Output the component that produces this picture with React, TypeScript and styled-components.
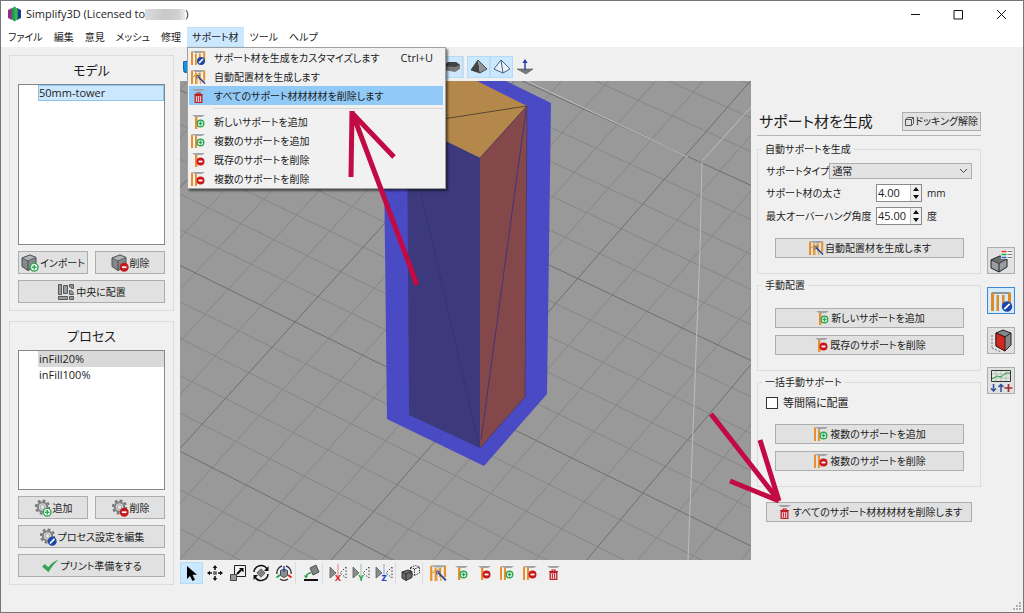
import React, { useState } from "react";
import styled, { createGlobalStyle, css } from "styled-components";

const GlobalStyle = createGlobalStyle`
  * { box-sizing: border-box; }
  body {
    margin: 0;
    background: #f0f0f0;
    color: #1c1c1c;
    font: 10px/14px "Open Sans", "Noto Sans CJK JP", sans-serif;
    font-feature-settings: "palt";
  }
  button, input, select {
    font: inherit;
    font-feature-settings: inherit;
    color: inherit;
    margin: 0;
  }
  svg { display: block; flex: none; }
`;

/* ---------- window frame ---------- */

const Window = styled.div`
  position: relative;
  display: flex;
  flex-direction: column;
  min-height: 100vh;
  border: 1px solid #77747a;
  background: #f0f0f0;
`;

const TitleBar = styled.header`
  display: flex;
  align-items: center;
  height: 26px;
  padding-left: 6px;
  background: #fff;
  font-size: 11px;
`;

const Title = styled.h1`
  display: flex;
  flex: 1;
  align-items: center;
  margin: 0 0 0 4px;
  font: inherit;
`;

const Redacted = styled.span`
  width: 40px;
  height: 11px;
  background: linear-gradient(90deg, #dcdcdc, #c8c8c8 50%, #d2d2d2 85%, #ececec);
`;

const WindowButton = styled.button`
  display: grid;
  place-items: center;
  width: 43px;
  height: 26px;
  padding: 0;
  border: 0;
  background: none;
`;

const MenuBar = styled.nav`
  display: flex;
  gap: 1px;
  height: 20px;
  padding-left: 2px;
  background: #fff;
`;

const MenuSlot = styled.div`
  position: relative;
`;

const MenuTitle = styled.button<{ $open?: boolean }>`
  height: 20px;
  padding: 0 5px;
  border: 1px solid ${(p) => (p.$open ? "#c2e2f8" : "transparent")};
  border-width: 1px 0;
  background: ${(p) => (p.$open ? "#cce8ff" : "transparent")};
  line-height: 18px;
  white-space: nowrap;
`;

const Menu = styled.div`
  position: absolute;
  top: 20px;
  left: 0;
  z-index: 2;
  width: 259px;
  padding: 0 2px 0 1px;
  border: 1px solid #a0a0a0;
  background: #f1f1f1;
  box-shadow: 2px 2px 2px rgba(0, 0, 0, 0.5);
`;

const MenuItem = styled.button<{ $active?: boolean }>`
  display: flex;
  align-items: center;
  width: 100%;
  height: 19px;
  padding: 0 10px 0 1px;
  border: 0;
  background: ${(p) => (p.$active ? "#91c9f7" : "transparent")};
  text-align: left;
  white-space: nowrap;
`;

const MenuLabel = styled.span`
  flex: 1;
  margin-left: 8px;
`;

const Shortcut = styled.kbd`
  font: inherit;
  font-size: 11px;
`;

const MenuRule = styled.hr`
  height: 1px;
  margin: 3px 0 3px 24px;
  border: 0;
  background: #d7d7d7;
`;

/* ---------- shared controls ---------- */

const PushButton = styled.button<{ $tall?: boolean }>`
  display: flex;
  flex: 1;
  align-items: center;
  justify-content: center;
  gap: 1px;
  height: ${(p) => (p.$tall ? "23px" : "20px")};
  flex-basis: ${(p) => (p.$tall ? "0" : "auto")};
  padding: 0;
  border: 1px solid #adadad;
  background: #e1e1e1;
  white-space: nowrap;
`;

const ToolRow = styled.div`
  display: flex;
  align-items: center;
  height: 24px;
`;

const ToolGroup = styled.div<{ $far?: boolean }>`
  display: flex;
  ${(p) => p.$far && css`margin-left: 237px;`}
  & + & { border-left: 1px solid #dcdcdc; padding-left: 3px; }
`;

const ToolButton = styled.button<{ $on?: boolean }>`
  display: grid;
  place-items: center;
  width: 23px;
  height: 22px;
  padding: 0;
  border: 1px solid ${(p) => (p.$on ? "#b4dcf6" : "transparent")};
  background: ${(p) => (p.$on ? "#cce8ff" : "transparent")};
`;

/* ---------- body columns ---------- */

const Body = styled.div`
  display: flex;
  flex: 1;
  padding: 0 8px;
`;

const LeftColumn = styled.aside`
  display: flex;
  flex: none;
  flex-direction: column;
  gap: 10px;
  width: 165px;
  padding-top: 8px;
`;

const Panel = styled.section`
  display: flex;
  flex: 1 1 auto;
  flex-direction: column;
  gap: 6px;
  padding: 0 8px 7px;
  border: 1px solid #dcdcdc;
`;

const PanelTitle = styled.h2`
  margin: 0 0 -6px;
  font-size: 13px;
  font-weight: 400;
  line-height: 28px;
  text-align: center;
`;

const List = styled.ul<{ $basis: number }>`
  flex: 1 0 ${(p) => p.$basis}px;
  margin: 0;
  padding: 0 0 0 19px;
  border: 1px solid #828790;
  background: #fff;
  font-size: 11px;
  list-style: none;
`;

const ListRow = styled.li<{ $mark?: "focus" | "plain" }>`
  height: 16px;
  border: 1px solid ${(p) => (p.$mark === "focus" ? "#8fc4ea" : "transparent")};
  background: ${(p) => (p.$mark === "focus" ? "#cce8ff" : p.$mark === "plain" ? "#d9d9d9" : "none")};
  line-height: 14px;
`;

const ButtonPair = styled.div`
  display: flex;
  gap: 7px;
`;

const Center = styled.main`
  display: flex;
  flex: 1;
  flex-direction: column;
  min-width: 0;
  margin: 0 6px;
  padding-top: 8px;
`;

const Viewport = styled.div`
  position: relative;
  flex: 1;
  min-height: 300px;
  margin: 2px 0 1px;
  background: #999;
  & > svg { position: absolute; width: 100%; height: 100%; }
`;

const RightColumn = styled.aside`
  flex: none;
  width: 224px;
  padding-top: 64px;
`;

const DockHeader = styled.div`
  display: flex;
  align-items: center;
  justify-content: space-between;
  height: 25px;
  padding: 0 0 4px 2px;
  border-bottom: 1px solid #b4b4b4;
  margin-bottom: 6px;
`;

const DockTitle = styled.h2`
  margin: 0;
  font-size: 15px;
  font-weight: 400;
  line-height: 20px;
`;

const UndockButton = styled(PushButton)`
  flex: none;
  width: 79px;
  height: 19px;
`;

const Group = styled.fieldset<{ $top: number }>`
  min-width: 0;
  margin: 0 0 4px;
  padding: ${(p) => p.$top}px 8px 15px;
  border: 1px solid #dcdcdc;
`;

const GroupTitle = styled.legend`
  margin-left: -4px;
  padding: 0 3px;
`;

const Field = styled.div<{ $h: number }>`
  display: flex;
  align-items: center;
  justify-content: space-between;
  height: ${(p) => p.$h}px;
  margin-bottom: 5px;
  white-space: nowrap;
`;

const Select = styled.select`
  width: 143px;
  height: 16px;
  padding: 0 2px;
  border: 1px solid #adadad;
  border-radius: 0;
  appearance: none;
  background: #e3e3e3;
  line-height: 14px;
`;

const SelectBox = styled.div`
  position: relative;
  display: flex;
  svg { position: absolute; right: 4px; top: 4px; pointer-events: none; }
`;

const SpinCell = styled.div`
  display: flex;
  flex: none;
  align-items: center;
  width: 96px;
`;

const Spin = styled.div`
  display: flex;
  width: 46px;
  height: 18px;
  margin-right: 5px;
  border: 1px solid #8a8a8a;
  background: #fff;
  font-size: 11px;
`;

const SpinInput = styled.input`
  flex: 1;
  min-width: 0;
  padding: 0 0 0 1px;
  border: 0;
  background: none;
`;

const SpinArrows = styled.div`
  display: flex;
  flex-direction: column;
  width: 11px;
`;

const SpinArrow = styled.button`
  display: grid;
  flex: 1;
  place-items: center;
  padding: 0;
  border: 0;
  border-left: 1px solid #c4c4c4;
  background: #f0f0f0;
`;

const ButtonStack = styled.div<{ $top?: number }>`
  display: flex;
  flex-direction: column;
  gap: 7px;
  margin: ${(p) => p.$top ?? 0}px 8px 0 9px;
`;

const Check = styled.label`
  display: flex;
  align-items: center;
  gap: 5px;
  height: 14px;
  font-size: 11px;
  input {
    width: 12px;
    height: 12px;
    appearance: none;
    border: 1px solid #333;
    background: #fff;
  }
`;

const RemoveAll = styled.div`
  display: flex;
  margin: 15px 9px 0;
`;

const SideTabs = styled.nav`
  display: flex;
  flex: none;
  flex-direction: column;
  gap: 13px;
  margin-left: 6px;
  padding-top: 200px;
`;

const SideTab = styled.button<{ $on?: boolean }>`
  display: grid;
  place-items: center;
  width: 28px;
  height: 27px;
  padding: 0;
  border: 1px solid ${(p) => (p.$on ? "#3b8ad0" : "#adadad")};
  background: ${(p) => (p.$on ? "#d5eafa" : "#e1e1e1")};
`;

const StatusBar = styled.footer`
  display: flex;
  align-items: flex-end;
  justify-content: flex-end;
  height: 27px;
  padding: 1px;
`;

const Arrows = styled.svg`
  position: absolute;
  top: -1px;
  left: -1px;
  z-index: 3;
  pointer-events: none;
`;

/* ---------- icons ---------- */

type Mark = "add" | "remove" | "edit" | "wand";

const Badge = ({ kind, x, y, r = 3.8 }: { kind: Mark; x: number; y: number; r?: number }) => {
  if (kind === "wand")
    return (
      <g>
        <path d={`M${x - 3} ${y - 3}L${x + 4} ${y + 4}`} stroke="#26408f" strokeWidth="1.6" />
        <path d={`M${x - 4} ${y - 1}v-3h3`} stroke="#5f7188" strokeWidth="1.2" fill="none" />
      </g>
    );
  const fill = { add: "#fff", remove: "#c9161d", edit: "#1d46a8" }[kind];
  const h = r * 0.6;
  return (
    <g>
      <circle cx={x} cy={y} r={r} fill={fill} stroke={kind === "add" ? "#2fa653" : fill} strokeWidth="1.4" />
      {kind === "add" && <path d={`M${x - h} ${y}h${2 * h}M${x} ${y - h}v${2 * h}`} stroke="#2fa653" strokeWidth="1.5" />}
      {kind === "remove" && <path d={`M${x - h} ${y}h${2 * h}`} stroke="#fff" strokeWidth="1.8" />}
      {kind === "edit" && <path d={`M${x - h} ${y + h}l${2 * h} ${-2 * h}`} stroke="#fff" strokeWidth="1.7" />}
    </g>
  );
};

const Cap = () => <path d="M2 1h13l-3 2h-7z" fill="#a0a4a8" stroke="none" />;

const SupportIcon = ({ pillars, mark, size = 16 }: { pillars: 1 | 2 | 4; mark: Mark; size?: number }) => (
  <svg width={size} height={size} viewBox="0 0 16 16" aria-hidden>
    <Cap />
    <g fill="#e6912d">
      {pillars === 1 && <path d="M5 3h2.400v12h-2.400z" />}
      {pillars === 2 && <path d="M1 1.500h2v13.500h-2zM5 3h2v12h-2z" />}
      {pillars === 4 && <path d="M1 1.500h2v13.500h-2zM5 3.500h1.800v11.500h-1.800zM9 3.500h1.800v8h-1.800zM13.200 1.500h2v10h-2z" />}
    </g>
    {pillars === 4 && mark === "wand" && (
      <path d="M3 8l2.500-2M7 6l2.500-2M7 9v6M10.500 12v3M14.200 11v1" stroke="#e6a04c" strokeWidth="1.200" fill="none" />
    )}
    <Badge kind={mark} x={mark === "edit" || mark === "wand" ? 11 : 10.5} y={mark === "wand" ? 10.5 : mark === "edit" ? 11 : 9.5} r={3.3} />
  </svg>
);

const TrashIcon = () => (
  <svg width="16" height="16" viewBox="0 0 16 16" fill="none" stroke="#bd2026" aria-hidden>
    <Cap />
    <path d="M4 6.500h9M7 6v-1h3v1" strokeWidth="1.200" />
    <path d="M5.200 7.500h6.600v6.800h-6.600z" fill="#f3dede" strokeWidth="1.300" />
    <path d="M7.400 8.500v5M9.600 8.500v5" />
  </svg>
);

const CubeIcon = ({ mark }: { mark: Mark }) => (
  <svg width="18" height="18" viewBox="0 0 18 18" aria-hidden>
    <path d="M1 4l8-3 6 2.500v9l-8 4-6-4z" fill="#85888a" stroke="#4a4d4f" />
    <path d="M1 4l6 2.800 8-3.300-6-2.500z" fill="#b0b2b4" stroke="#4a4d4f" strokeWidth=".7" />
    <path d="M7 6.800v9.700" stroke="#4a4d4f" />
    <Badge kind={mark} x={13.2} y={13.2} />
  </svg>
);

const GearIcon = ({ mark }: { mark: Mark }) => (
  <svg width="18" height="18" viewBox="0 0 18 18" aria-hidden>
    <circle cx="8.500" cy="8" r="6.600" fill="none" stroke="#707375" strokeWidth="2" strokeDasharray="2.800 2.380" />
    <circle cx="8.500" cy="8" r="4.700" fill="#d8d8d8" stroke="#7d8082" strokeWidth="2" />
    <circle cx="8.500" cy="8" r="2.300" fill="#e4e4e4" stroke="#888" strokeWidth=".6" />
    <Badge kind={mark} x={13.2} y={13.2} />
  </svg>
);

const ArrangeIcon = () => (
  <svg width="18" height="18" viewBox="0 0 18 18" fill="#999c9e" stroke="#55585a" aria-hidden>
    <path d="M1.500 1.500h3v10h-3zM6.500 2.500h4v8h-4zM1.500 13.500h9v3h-9zM12.500 1.500h4v4h-2v-1.500h-2zM12.500 7.500c4 0 4 3 4 4h-4zM12.500 13.500h4v3h-4z" />
  </svg>
);

const CheckIcon = () => (
  <svg width="18" height="18" viewBox="0 0 18 18" aria-hidden>
    <path d="M1 9.500l3-2.500 3.200 3.200c3-3.700 6-6 10.300-7.700-4.500 4.500-7.500 8.200-10 12.700z" fill="#35a655" />
  </svg>
);

const AppIcon = () => (
  <svg width="15" height="16" viewBox="0 0 15 16" aria-hidden>
    <path d="M1 4l4-2v12l-4-2z" fill="#a3218e" />
    <path d="M14 4l-4-2v12l4-2z" fill="#1c3c8c" />
    <path d="M4.500 3l3-2.500 3 2.500v10l-3 2.500-3-2.500z" fill="#1c9b4a" />
    <path d="M7.500 .5l3 2.500v10l-3 2.500z" fill="#37b55c" />
  </svg>
);

const UndockIcon = () => (
  <svg width="9" height="9" viewBox="0 0 9 9" fill="none" stroke="#555" aria-hidden>
    <path d="M2.500 .5h6l-2 2v6h-6v-6z M.5 2.500h6M8.500 .5v6l-2 2" />
  </svg>
);

const Chevron = () => (
  <svg width="9" height="8" viewBox="0 0 9 8" fill="none" stroke="#444" aria-hidden>
    <path d="M1 2l3.500 3.500 3.500-3.500" />
  </svg>
);

const tool = (children: React.ReactNode) => (
  <svg width="18" height="18" viewBox="0 0 18 18" fill="none" aria-hidden>{children}</svg>
);

const Mirror = ({ axis, color }: { axis: string; color: string }) => (
  <svg width="20" height="20" viewBox="0 0 20 20" fill="none" aria-hidden>
    <path d="M2 4v11l6-5z" fill="#8a8c8e" stroke="#55585a" strokeWidth=".8" />
    <path d="M18 4v11l-6-5z" stroke="#333" strokeDasharray="1.500 1.800" />
    <path d="M10 1v16" stroke={color} strokeWidth=".7" strokeOpacity=".7" />
    <text x="10" y="18" fontSize="9" fontWeight="700" textAnchor="middle" fill={color}>{axis}</text>
  </svg>
);

const SelectTool = () => tool(<path d="M4 2v13l3-3 2.500 5 2.500-1.200-2.500-5h4.500z" fill="#000" />);

const MoveTool = () => tool(
  <g fill="#111">
    <path d="M7.200 7.200h3.600v3.600h-3.600z" fill="#66696b" />
    <path d="M9 1l2.300 3h-1.500v2h-1.600v-2h-1.500zM9 17l2.300-3h-1.500v-2h-1.600v2h-1.500zM1 9l3-2.300v1.500h2v1.600h-2v1.500zM17 9l-3-2.300v1.500h-2v1.600h2v1.500z" />
  </g>
);

const ScaleTool = () => tool(
  <g>
    <path d="M5.500 1.500h11v11h-11z" stroke="#222" fill="#f2f2f2" />
    <path d="M1.500 10.500h6v6h-6z" fill="#96999b" stroke="#444" />
    <path d="M8 10l4-4" stroke="#000" strokeWidth="2" />
    <path d="M10 4h4.500v4.500z" fill="#000" />
  </g>
);

const RotateTool = () => tool(
  <g>
    <path d="M2 8a7 7 0 0 1 13-3M16 10a7 7 0 0 1-13 3" stroke="#111" strokeWidth="1.500" />
    <path d="M16.500 2v5h-4.500zM1.500 16v-5h4.500z" fill="#111" />
    <path d="M9 4.800l4.200 4.200-4.200 4.200-4.200-4.200z" fill="#808385" stroke="#666" />
  </g>
);

const AxesTool = () => tool(
  <g>
    <path d="M2 10a7 7 0 0 1 5-8M11 2a7 7 0 0 1 5 8M13 15a7 7 0 0 1-8 0" stroke="#333" strokeWidth="1.300" />
    <path d="M5.500 6.500l3.500-1.500 3.500 1.500v5l-3.500 2-3.500-2z" fill="#8b8e91" stroke="#494c4e" />
    <path d="M9 8v-6" stroke="#2b49c8" strokeWidth="1.500" />
    <path d="M5 11l-3.500 2.500" stroke="#23a541" strokeWidth="2" />
    <path d="M13 11l3.500 2.500" stroke="#e02020" strokeWidth="2" />
  </g>
);

const FaceTool = () => tool(
  <g>
    <path d="M8 4l6-3 3 7-6 3z" fill="#808385" stroke="#4d5052" />
    <path d="M2 16h14" stroke="#111" strokeWidth="2" />
    <path d="M9 9c-3 0-4.500 1.500-5 4" stroke="#2a9b48" strokeWidth="1.300" />
    <path d="M1.800 11.500h4.400l-2.200 3z" fill="#2a9b48" />
  </g>
);

const DuplicateTool = () => (
  <svg width="20" height="18" viewBox="0 0 20 18" fill="none" aria-hidden>
    <path d="M1 8l6-2 4 1.500v6l-6 3-4-2.500z" fill="#66696b" stroke="#333" />
    <path d="M1 8l4 2 6-2.500M5 10v6.500" stroke="#333" />
    <path d="M9.500 3.500l5-2 4 1.500v6l-5 2.500-4-2zM9.500 3.500l4 1.500 5-2M13.500 5v6" stroke="#333" strokeDasharray="1.500 1" />
  </svg>
);

const SolidTool = () => tool(<g><path d="M1 8l4-4h8l4 3v4l-5 3-11-2z" fill="#77797b" /><path d="M1 8l4-4h8l4 3-5 2z" fill="#3f4143" /></g>);
const ShadedTool = () => tool(<g><path d="M8 2l-7 10 9 3z" fill="#444" /><path d="M8 2l2 13 7-4z" fill="#909396" /><path d="M8 2l-7 10 9 3 7-4z" stroke="#333" strokeWidth=".8" /></g>);
const WireTool = () => tool(<path d="M8 2l-7 9 9 4 7-4zM8 2l2 13" stroke="#35506b" strokeWidth=".9" fill="#eaf4fc" />);
const NormalTool = () => tool(<g><path d="M1 11h16l-7 5z" fill="#77797b" stroke="#555" strokeWidth=".6" /><path d="M9 12v-10" stroke="#2344a8" strokeWidth="1.500" /><path d="M6.300 5l2.700-4 2.700 4z" fill="#2344a8" /></g>);
const ViewTool = () => tool(<path d="M0 4l5-1h8v10l-5 2-7-1z" fill="#1592e6" stroke="#0b5c9c" />);

/* Side tab drawings */
const ProcessTab = () => (
  <svg width="24" height="24" viewBox="0 0 24 24" fill="none" aria-hidden>
    <path d="M2 11l9-4 7 3v8l-8 5-8-4z" fill="#9a9d9f" stroke="#222" />
    <path d="M2 11l8 3.500 8-4.500-7-3z" fill="#6d7072" stroke="#222" strokeWidth=".7" />
    <path d="M10 14.500v8.500" stroke="#222" />
    <path d="M12 1h11v9h-11z" fill="#f4f4f4" />
    <path d="M12.500 2.500h5" stroke="#e33" strokeWidth="1.600" />
    <path d="M12.500 5.500h5" stroke="#2a4" strokeWidth="1.600" />
    <path d="M12.500 8.500h5" stroke="#26c" strokeWidth="1.600" />
    <path d="M18.500 2.500h4.500M18.500 5.500h4.500M18.500 8.500h4.500" stroke="#777" />
  </svg>
);

const SupportTab = () => (
  <svg width="24" height="24" viewBox="0 0 24 24" aria-hidden>
    <path d="M2 3h20l-3 2h-14z" fill="#8f9496" />
    <path d="M2 4h3v18h-3zM7.500 6h2.500v16h-2.500zM13 6h2.500v9h-2.500zM19 4h3v10h-3z" fill="#e28a22" />
    <Badge kind="edit" x={18} y={17.5} r={4.5} />
  </svg>
);

const SectionTab = () => (
  <svg width="24" height="24" viewBox="0 0 24 24" fill="none" aria-hidden>
    <path d="M7 4l7-3 8 3v12l-6 6-9-5z" fill="#84878a" stroke="#222" />
    <path d="M7 4l9 4 6-4" stroke="#222" />
    <path d="M7 4l9 4v14l-9-5z" fill="#cf2a20" stroke="#4a1111" />
    <path d="M3 6v13M3 19l9 4" stroke="#777" strokeDasharray="2 1.500" />
  </svg>
);

const AxisTab = () => (
  <svg width="24" height="24" viewBox="0 0 24 24" fill="none" aria-hidden>
    <path d="M2.500 1.500h19v11h-19z" fill="#dfe8df" stroke="#333" />
    <path d="M7 2v10M12 2v10M17 2v10M3 5h18M3 9h18" stroke="#a9b5a9" strokeWidth=".7" />
    <path d="M3 10l5-3 4 1 5-4 4 0" stroke="#2a9b48" />
    <path d="M4.500 15v7M2 19.500l2.500 2.500 2.500-2.500" stroke="#2f4f9c" strokeWidth="1.500" />
    <path d="M12 23v-7M9.500 18l2.500-2.500 2.500 2.500" stroke="#2f4f9c" strokeWidth="1.500" />
    <path d="M19.500 15v8M15.500 19h8" stroke="#a52a2a" strokeWidth="1.700" />
  </svg>
);

/* ---------- 3D view ---------- */

/* Projects build-plate coordinates (one unit = one major division) to the view. */
const project = (p: number, q: number): [number, number] => {
  const w = 1 - 0.0172 * p - 0.018 * q;
  return [(466 + 165.9 * p - 122 * q) / w, (406 + 78.5 * p + 122.5 * q) / w];
};

const plateLine = (a: [number, number], b: [number, number]) => `M${a.join(" ")}L${b.join(" ")}`;

const buildPlate = () => {
  let minor = "";
  let major = "";
  for (let i = -25; i <= 25; i += 1) {
    const t = i / 5;
    const pair = plateLine(project(t, -5), project(t, 5)) + plateLine(project(-5, t), project(5, t));
    if (i % 5 === 0) major += pair;
    else minor += pair;
  }
  return { minor, major };
};

const Scene = () => {
  const { minor, major } = buildPlate();
  return (
    <svg viewBox="180 81 571 479" preserveAspectRatio="xMidYMid slice" fill="none" role="img" aria-label="50mm-tower">
      <path d={minor} stroke="#868686" />
      <path d={major} stroke="#6e6e6e" />
      <path d="M527 81L688 157M703 160L751 107M702 162L700 250L688 560" stroke="#bcbcbc" />
      <path d="M383 80H504L551 103L547 394L484 466L387 419z" fill="#4341ca" fillOpacity=".9" />
      <path d="M380 80H475L527 106L480 158L380 110z" fill="#b3884a" />
      <path d="M407 122L480 158V448L409 415z" fill="#3c3a7c" />
      <path d="M480 158L527 106L525 397L480 448z" fill="#85484a" />
      <path d="M527 106L430 121" stroke="#5a4630" />
      <path d="M526 110L481 440" stroke="#41357c" />
      <path d="M418 180L479 446" stroke="#353374" />
      <path d="M480 158L527 106L525 397L480 448" stroke="#4c3658" strokeWidth=".8" />
    </svg>
  );
};

/* ---------- application ---------- */

const SpinField = ({ id, label, value, unit }: { id: string; label: string; value: string; unit: string }) => {
  const [current, setCurrent] = useState(value);
  const step = (d: number) => setCurrent((v) => (parseFloat(v) + d).toFixed(2));
  return (
    <Field $h={18}>
      <label htmlFor={id}>{label}</label>
      <SpinCell>
        <Spin>
          <SpinInput id={id} value={current} onChange={(e) => setCurrent(e.target.value)} />
          <SpinArrows>
            <SpinArrow aria-label="+" onClick={() => step(1)}>
              <svg width="6" height="4" viewBox="0 0 6 4"><path d="M3 0l3 4h-6z" fill="#111" /></svg>
            </SpinArrow>
            <SpinArrow aria-label="-" onClick={() => step(-1)}>
              <svg width="6" height="4" viewBox="0 0 6 4"><path d="M3 4l3-4h-6z" fill="#111" /></svg>
            </SpinArrow>
          </SpinArrows>
        </Spin>
        {unit}
      </SpinCell>
    </Field>
  );
};

export default function App() {
  return (
    <Window>
      <GlobalStyle />
      <TitleBar>
        <AppIcon />
        <Title>Simplify3D (Licensed to<Redacted />)</Title>
        <WindowButton aria-label="最小化">
          <svg width="11" height="11" viewBox="0 0 11 11"><path d="M1 5.500h9" stroke="#111" /></svg>
        </WindowButton>
        <WindowButton aria-label="最大化">
          <svg width="11" height="11" viewBox="0 0 11 11"><path d="M1 1.500h8.500v8.500h-8.500z" fill="none" stroke="#111" /></svg>
        </WindowButton>
        <WindowButton aria-label="閉じる">
          <svg width="11" height="11" viewBox="0 0 11 11"><path d="M1 1l9 9M10 1l-9 9" stroke="#111" /></svg>
        </WindowButton>
      </TitleBar>

      <MenuBar>
        <MenuTitle>ファイル</MenuTitle>
        <MenuTitle>編集</MenuTitle>
        <MenuTitle>意見</MenuTitle>
        <MenuTitle>メッシュ</MenuTitle>
        <MenuTitle>修理</MenuTitle>
        <MenuSlot>
          <MenuTitle $open>サポート材</MenuTitle>
          <Menu>
            <MenuItem><SupportIcon pillars={4} mark="edit" /><MenuLabel>サポート材を生成をカスタマイズします</MenuLabel><Shortcut>Ctrl+U</Shortcut></MenuItem>
            <MenuItem><SupportIcon pillars={4} mark="wand" /><MenuLabel>自動配置材を生成します</MenuLabel></MenuItem>
            <MenuItem $active><TrashIcon /><MenuLabel>すべてのサポート材材材材を削除します</MenuLabel></MenuItem>
            <MenuRule />
            <MenuItem><SupportIcon pillars={1} mark="add" /><MenuLabel>新しいサポートを追加</MenuLabel></MenuItem>
            <MenuItem><SupportIcon pillars={2} mark="add" /><MenuLabel>複数のサポートを追加</MenuLabel></MenuItem>
            <MenuItem><SupportIcon pillars={1} mark="remove" /><MenuLabel>既存のサポートを削除</MenuLabel></MenuItem>
            <MenuItem><SupportIcon pillars={2} mark="remove" /><MenuLabel>複数のサポートを削除</MenuLabel></MenuItem>
          </Menu>
        </MenuSlot>
        <MenuTitle>ツール</MenuTitle>
        <MenuTitle>ヘルプ</MenuTitle>
      </MenuBar>

      <Body>
        <LeftColumn>
          <Panel>
            <PanelTitle>モデル</PanelTitle>
            <List $basis={161}>
              <ListRow $mark="focus">50mm-tower</ListRow>
            </List>
            <ButtonPair>
              <PushButton $tall><CubeIcon mark="add" />インポート</PushButton>
              <PushButton $tall><CubeIcon mark="remove" />削除</PushButton>
            </ButtonPair>
            <ButtonPair>
              <PushButton $tall><ArrangeIcon />中央に配置</PushButton>
            </ButtonPair>
          </Panel>
          <Panel>
            <PanelTitle>プロセス</PanelTitle>
            <List $basis={140}>
              <ListRow $mark="plain">inFill20%</ListRow>
              <ListRow>inFill100%</ListRow>
            </List>
            <ButtonPair>
              <PushButton $tall><GearIcon mark="add" />追加</PushButton>
              <PushButton $tall><GearIcon mark="remove" />削除</PushButton>
            </ButtonPair>
            <ButtonPair>
              <PushButton $tall><GearIcon mark="edit" />プロセス設定を編集</PushButton>
            </ButtonPair>
            <ButtonPair>
              <PushButton $tall><CheckIcon />プリント準備をする</PushButton>
            </ButtonPair>
          </Panel>
        </LeftColumn>

        <Center>
          <ToolRow>
            <ToolButton><ViewTool /></ToolButton>
            <ToolGroup $far><ToolButton $on><SolidTool /></ToolButton></ToolGroup>
            <ToolGroup>
              <ToolButton $on><ShadedTool /></ToolButton>
              <ToolButton $on><WireTool /></ToolButton>
              <ToolButton><NormalTool /></ToolButton>
            </ToolGroup>
          </ToolRow>
          <Viewport><Scene /></Viewport>
          <ToolRow>
            <ToolGroup>
              <ToolButton $on><SelectTool /></ToolButton>
              <ToolButton><MoveTool /></ToolButton>
              <ToolButton><ScaleTool /></ToolButton>
              <ToolButton><RotateTool /></ToolButton>
              <ToolButton><AxesTool /></ToolButton>
            </ToolGroup>
            <ToolGroup><ToolButton><FaceTool /></ToolButton></ToolGroup>
            <ToolGroup>
              <ToolButton><Mirror axis="X" color="#e01b1b" /></ToolButton>
              <ToolButton><Mirror axis="Y" color="#1fa03c" /></ToolButton>
              <ToolButton><Mirror axis="Z" color="#2446d8" /></ToolButton>
            </ToolGroup>
            <ToolGroup><ToolButton><DuplicateTool /></ToolButton></ToolGroup>
            <ToolGroup>
              <ToolButton><SupportIcon pillars={4} mark="wand" size={18} /></ToolButton>
              <ToolButton><SupportIcon pillars={1} mark="add" /></ToolButton>
              <ToolButton><SupportIcon pillars={1} mark="remove" /></ToolButton>
              <ToolButton><SupportIcon pillars={2} mark="add" /></ToolButton>
              <ToolButton><SupportIcon pillars={2} mark="remove" /></ToolButton>
              <ToolButton><TrashIcon /></ToolButton>
            </ToolGroup>
          </ToolRow>
        </Center>

        <RightColumn>
          <DockHeader>
            <DockTitle>サポート材を生成</DockTitle>
            <UndockButton><UndockIcon />ドッキング解除</UndockButton>
          </DockHeader>
          <Group $top={7}>
            <GroupTitle>自動サポートを生成</GroupTitle>
            <Field $h={16}>
              <label htmlFor="support-type">サポートタイプ</label>
              <SelectBox>
                <Select id="support-type"><option>通常</option></Select>
                <Chevron />
              </SelectBox>
            </Field>
            <SpinField id="thickness" label="サポート材の太さ" value="4.00" unit="mm" />
            <SpinField id="overhang" label="最大オーバーハング角度" value="45.00" unit="度" />
            <ButtonStack $top={13}>
              <PushButton><SupportIcon pillars={4} mark="wand" />自動配置材を生成します</PushButton>
            </ButtonStack>
          </Group>
          <Group $top={16}>
            <GroupTitle>手動配置</GroupTitle>
            <ButtonStack>
              <PushButton><SupportIcon pillars={1} mark="add" />新しいサポートを追加</PushButton>
              <PushButton><SupportIcon pillars={1} mark="remove" />既存のサポートを削除</PushButton>
            </ButtonStack>
          </Group>
          <Group $top={7}>
            <GroupTitle>一括手動サポート</GroupTitle>
            <Check><input type="checkbox" />等間隔に配置</Check>
            <ButtonStack $top={14}>
              <PushButton><SupportIcon pillars={2} mark="add" />複数のサポートを追加</PushButton>
              <PushButton><SupportIcon pillars={2} mark="remove" />複数のサポートを削除</PushButton>
            </ButtonStack>
          </Group>
          <RemoveAll>
            <PushButton><TrashIcon />すべてのサポート材材材材を削除します</PushButton>
          </RemoveAll>
        </RightColumn>

        <SideTabs>
          <SideTab><ProcessTab /></SideTab>
          <SideTab $on><SupportTab /></SideTab>
          <SideTab><SectionTab /></SideTab>
          <SideTab><AxisTab /></SideTab>
        </SideTabs>
      </Body>

      <StatusBar>
        <svg width="10" height="10" viewBox="0 0 10 10" fill="#b0b0b0" aria-hidden>
          <path d="M7 1h2v2h-2zM4 4h2v2h-2zM7 4h2v2h-2zM1 7h2v2h-2zM4 7h2v2h-2zM7 7h2v2h-2z" />
        </svg>
      </StatusBar>

      <Arrows width="1024" height="613" viewBox="0 0 1024 613" fill="none" stroke="#c20a45" strokeWidth="5" aria-hidden>
        <path d="M417 285L352 112M351 177L352 111M394 157L352 113" />
        <path d="M711 414L779 501M760 440L779 501M730 481L779 501" />
      </Arrows>
    </Window>
  );
}
